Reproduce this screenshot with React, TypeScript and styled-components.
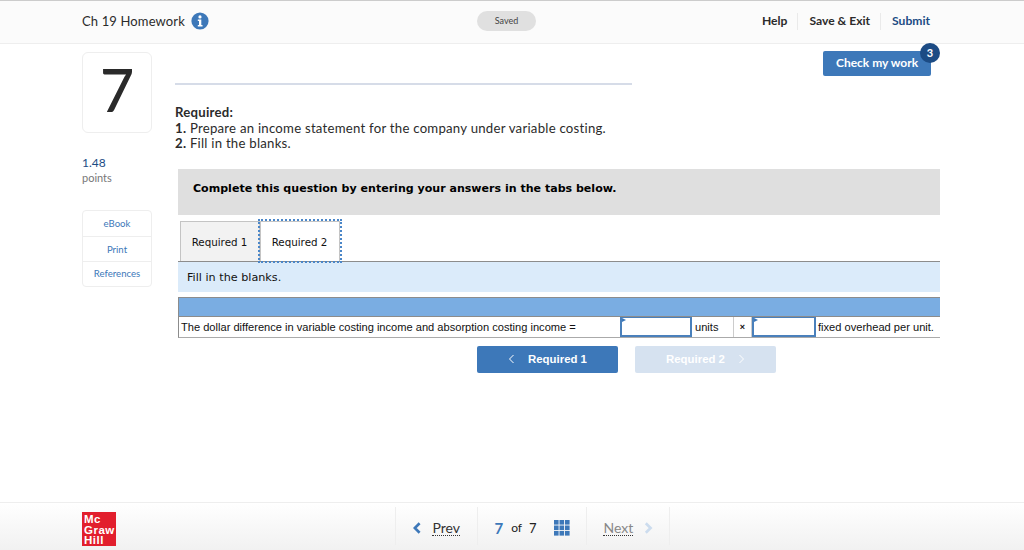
import styled, { createGlobalStyle } from "styled-components";

const GlobalStyle = createGlobalStyle`
  html, body {
    margin: 0;
    padding: 0;
    background: #fff;
  }
  * {
    box-sizing: border-box;
  }
`;

const sans = `Lato, "Open Sans", "Liberation Sans", sans-serif`;

const InfoIcon = () => (
  <svg width="18" height="18" viewBox="0 0 18 18">
    <circle cx="9" cy="9" r="8.6" fill="#3d78b9" />
    <circle cx="9" cy="4.9" r="1.6" fill="#fff" />
    <path d="M6.8 7.5h3.5v5.4h1.2v1.5H6.8v-1.5H8v-3.9H6.8z" fill="#fff" />
  </svg>
);

const Chevron = ({ left, color, size }: { left?: boolean; color: string; size: number }) => (
  <svg width={size * 0.7} height={size} viewBox="0 0 7 10">
    <path d={left ? "M5.5 1L1.5 5l4 4" : "M1.5 1l4 4-4 4"} fill="none" stroke={color} strokeWidth={size > 11 ? 2.2 : 1} />
  </svg>
);

const GridIcon = () => (
  <svg width="16" height="16" viewBox="0 0 16 16">
    {[0, 5.5, 11].map((y) =>
      [0, 5.5, 11].map((x) => <rect key={`${x}-${y}`} x={x} y={y} width="4.6" height="4.6" fill="#3d78b9" />)
    )}
  </svg>
);

export default function App() {
  return (
    <Page>
      <GlobalStyle />
      <Header>
        <TitleGroup>
          <HeaderTitle>Ch 19 Homework</HeaderTitle>
          <InfoIcon />
        </TitleGroup>
        <SavedPill>Saved</SavedPill>
        <HeaderLinks>
          <HeaderLink>Help</HeaderLink>
          <HeaderLink>Save &amp; Exit</HeaderLink>
          <HeaderLink $accent>Submit</HeaderLink>
        </HeaderLinks>
      </Header>

      <Main>
        <Sidebar>
          <NumberCard>7</NumberCard>
          <Points>1.48</Points>
          <PointsLabel>points</PointsLabel>
          <ToolCard>
            <ToolItem $height={26} $line={25}>eBook</ToolItem>
            <ToolItem $height={25} $line={26}>Print</ToolItem>
            <ToolItem $height={24} $line={23}>References</ToolItem>
          </ToolCard>
        </Sidebar>

        <Content>
          <CheckRow>
            <CheckButton>
              Check my work
              <Badge>3</Badge>
            </CheckButton>
          </CheckRow>
          <Rule />
          <Instructions>
            <strong>Required:</strong>
            <br />
            <strong>1.</strong> Prepare an income statement for the company under variable costing.
            <br />
            <strong>2.</strong> Fill in the blanks.
          </Instructions>

          <Question>
            <Banner>Complete this question by entering your answers in the tabs below.</Banner>
            <Tabs>
              <Tab>Required 1</Tab>
              <Tab $active>Required 2</Tab>
            </Tabs>
            <TabPrompt>Fill in the blanks.</TabPrompt>
            <AnswerTable>
              <TableHead />
              <TableRow>
                <Statement>The dollar difference in variable costing income and absorption costing income =</Statement>
                <AnswerInput $width={72} />
                <UnitCell>units</UnitCell>
                <TimesCell>×</TimesCell>
                <AnswerInput $width={64} />
                <TailCell>fixed overhead per unit.</TailCell>
              </TableRow>
            </AnswerTable>
            <TabNav>
              <TabNavButton>
                <Chevron left color="#fff" size={10} />
                Required 1
              </TabNavButton>
              <TabNavButton $disabled>
                Required 2
                <Chevron color="#fff" size={10} />
              </TabNavButton>
            </TabNav>
          </Question>
        </Content>
      </Main>

      <Footer>
        <Logo>
          Mc
          <br />
          Graw
          <br />
          Hill
        </Logo>
        <Pager>
          <PagerCell $width={81}>
            <Chevron left color="#3d78b9" size={12} />
            <PagerLink>Prev</PagerLink>
          </PagerCell>
          <PagerCell $width={109}>
            <CurrentPage>7</CurrentPage>
            <OfText>of</OfText>
            <TotalPages>7</TotalPages>
            <GridIcon />
          </PagerCell>
          <PagerCell $width={83}>
            <PagerLink $muted>Next</PagerLink>
            <Chevron color="#ccdcee" size={12} />
          </PagerCell>
        </Pager>
      </Footer>
    </Page>
  );
}

const Page = styled.div`
  width: 1024px;
  height: 550px;
  display: flex;
  flex-direction: column;
  overflow: hidden;
  font-family: ${sans};
  color: #222;
`;

const Header = styled.header`
  height: 44px;
  flex: none;
  display: grid;
  grid-template-columns: 395px 59px 1fr;
  align-items: center;
  padding: 0 94px 2px 82px;
  background: #fbfbfb;
  border-top: 1px solid #ccc;
  border-bottom: 1px solid #eee;
`;

const TitleGroup = styled.div`
  display: flex;
  align-items: center;
  gap: 6px;
`;

const HeaderTitle = styled.div`
  font-size: 13px;
  letter-spacing: 0.01em;
  color: #2b2b2b;
`;

const SavedPill = styled.div`
  height: 20px;
  border-radius: 10px;
  background: #e0e0e0;
  font-size: 9px;
  line-height: 19px;
  text-align: center;
  color: #444;
`;

const HeaderLinks = styled.nav`
  display: flex;
  justify-content: flex-end;
  align-items: center;
`;

const HeaderLink = styled.div<{ $accent?: boolean }>`
  height: 17px;
  padding: 0 0 2px 11px;
  margin-left: 10px;
  border-left: 1px solid #eaeaea;
  font-size: 12.1px;
  line-height: 15px;
  font-weight: 700;
  color: ${(p) => (p.$accent ? "#1c4b84" : "#2b2b2b")};
  &:first-child {
    border-left: none;
  }
`;

const Main = styled.main`
  flex: 1;
  display: flex;
  padding-left: 82px;
`;

const Sidebar = styled.aside`
  width: 70px;
  flex: none;
  padding-top: 8px;
  display: flex;
  flex-direction: column;
`;

const NumberCard = styled.div`
  height: 81px;
  border: 1px solid #eee;
  border-radius: 6px;
  font-size: 59px;
  font-weight: 500;
  line-height: 74px;
  text-align: center;
  color: #2a2a2a;
`;

const Points = styled.div`
  margin-top: 22px;
  font-size: 12px;
  line-height: 16px;
  color: #1c4b84;
`;

const PointsLabel = styled.div`
  font-size: 11px;
  line-height: 14px;
  color: #777;
`;

const ToolCard = styled.div`
  margin-top: 25px;
  border: 1px solid #eee;
  border-radius: 4px;
`;

const ToolItem = styled.div<{ $height: number; $line: number }>`
  height: ${(p) => p.$height}px;
  line-height: ${(p) => p.$line}px;
  font-size: 9.6px;
  text-align: center;
  color: #3d78b9;
  border-bottom: 1px solid #eee;
  &:last-child {
    border-bottom: none;
  }
`;

const Content = styled.div`
  width: 765px;
  margin-left: 23px;
  padding-top: 7px;
`;

const CheckRow = styled.div`
  display: flex;
  justify-content: flex-end;
  padding-right: 9px;
`;

const CheckButton = styled.button`
  position: relative;
  width: 108px;
  height: 25px;
  padding: 0 0 2px;
  border: none;
  border-radius: 2px;
  background: #3d78b9;
  color: #fff;
  font-family: ${sans};
  font-size: 12px;
  font-weight: 700;
`;

const Badge = styled.span`
  position: absolute;
  top: -8px;
  right: -9px;
  width: 20px;
  height: 20px;
  border-radius: 50%;
  background: #1c4b84;
  font-size: 11px;
  line-height: 19px;
  text-align: center;
`;

const Rule = styled.div`
  width: 457px;
  height: 2px;
  margin-top: 7px;
  background: #d6dce8;
`;

const Instructions = styled.div`
  margin-top: 20px;
  font-size: 13.2px;
  letter-spacing: 0.24px;
  line-height: 15.5px;
  color: #2b2b2b;
`;

const Question = styled.section`
  margin: 17px 0 0 3px;
`;

const Banner = styled.div`
  height: 46px;
  padding-left: 15px;
  background: #dfdfdf;
  font-family: "DejaVu Sans", Verdana, sans-serif;
  font-size: 11.05px;
  font-weight: 700;
  line-height: 39px;
  color: #000;
`;

const Tabs = styled.div`
  display: flex;
  height: 41px;
  margin-top: 6px;
  padding-left: 2px;
  border-bottom: 1px solid #8c8c8c;
`;

const Tab = styled.div<{ $active?: boolean }>`
  width: 80px;
  height: 40px;
  padding-right: 1px;
  border: 1px solid #c4c4c4;
  border-bottom: none;
  background: ${(p) => (p.$active ? "#fff" : "#f2f2f2")};
  font-family: "DejaVu Sans", Verdana, sans-serif;
  font-size: 10.3px;
  line-height: 40px;
  text-align: center;
  color: #111;
  outline: ${(p) => (p.$active ? "2px dotted #4a86c8" : "none")};
`;

const TabPrompt = styled.div`
  height: 30px;
  padding-left: 9px;
  background: #dbebfa;
  font-family: "DejaVu Sans", Verdana, sans-serif;
  font-size: 11.2px;
  line-height: 32px;
  color: #111;
`;

const AnswerTable = styled.div`
  margin-top: 5px;
  border-left: 1px solid #8c8c8c;
  border-top: 1px solid #8c8c8c;
  border-bottom: 1px solid #aaa;
`;

const TableHead = styled.div`
  height: 19px;
  background: #7aade2;
  border-bottom: 1px solid #8c8c8c;
`;

const TableRow = styled.div`
  display: flex;
  height: 20px;
  font-family: "Liberation Sans", Arial, sans-serif;
  font-size: 11.1px;
  line-height: 20px;
  color: #111;
`;

const Statement = styled.div`
  width: 441px;
  padding-left: 2px;
  white-space: nowrap;
`;

const AnswerInput = styled.div<{ $width: number }>`
  position: relative;
  width: ${(p) => p.$width}px;
  border-style: solid;
  border-color: #4a80bb;
  border-width: 1px 2px 2px 2px;
  &::before {
    content: "";
    position: absolute;
    top: 0;
    left: 0;
    border-left: 4px solid #3d78b9;
    border-top: 2.5px solid transparent;
    border-bottom: 2.5px solid transparent;
  }
`;

const UnitCell = styled.div`
  width: 41px;
  padding-left: 3px;
`;

const TimesCell = styled.div`
  width: 19px;
  border-left: 1px solid #ccc;
  border-right: 1px solid #ccc;
  text-align: center;
  font-size: 9px;
  font-weight: 700;
`;

const TailCell = styled.div`
  flex: 1;
  padding-left: 2px;
  white-space: nowrap;
`;

const TabNav = styled.div`
  display: flex;
  gap: 17px;
  margin: 8px 0 0 299px;
`;

const TabNavButton = styled.button<{ $disabled?: boolean }>`
  width: 141px;
  height: 27px;
  display: flex;
  align-items: center;
  justify-content: center;
  gap: 13px;
  padding: 0;
  border: none;
  border-radius: 2px;
  background: ${(p) => (p.$disabled ? "#d6e2f0" : "#3d78b9")};
  color: #fff;
  font-family: "Liberation Sans", Arial, sans-serif;
  font-size: 11.4px;
  font-weight: 700;
`;

const Footer = styled.footer`
  height: 48px;
  flex: none;
  display: flex;
  align-items: flex-start;
  padding: 4px 0 0 82px;
  border-top: 1px solid #eee;
  background: linear-gradient(#fff, #f1f1f1);
`;

const Logo = styled.div`
  width: 34px;
  height: 34px;
  margin-top: 5px;
  padding: 2px 0 0 2px;
  background: #e21f2d;
  font-family: "Liberation Sans", Arial, sans-serif;
  font-size: 11.5px;
  font-weight: 700;
  letter-spacing: 0.5px;
  line-height: 10.6px;
  color: #fff;
`;

const Pager = styled.nav`
  display: flex;
  height: 38px;
  margin-left: 279px;
  border-left: 1px solid #eee;
  border-right: 1px solid #eee;
`;

const PagerCell = styled.div<{ $width: number }>`
  width: ${(p) => p.$width}px;
  display: flex;
  align-items: center;
  justify-content: center;
  gap: 11px;
  padding-top: 3px;
  & + & {
    border-left: 1px solid #eee;
  }
`;

const PagerLink = styled.span<{ $muted?: boolean }>`
  font-size: 14px;
  line-height: 15px;
  color: ${(p) => (p.$muted ? "#888" : "#333")};
  border-bottom: 1px dotted #333;
`;

const CurrentPage = styled.span`
  font-size: 15px;
  font-weight: 700;
  color: #3d78b9;
`;

const OfText = styled.span`
  font-size: 12px;
  margin-left: -3px;
`;

const TotalPages = styled.span`
  font-size: 13px;
  margin-left: -4px;
  margin-right: 6px;
`;
